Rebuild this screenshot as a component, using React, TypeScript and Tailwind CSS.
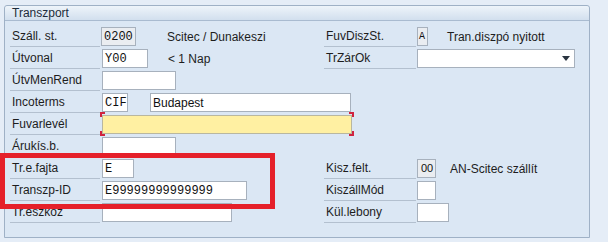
import React from "react";

const sans = { fontFamily: '"Liberation Sans", Arial, sans-serif' };
const mono = { fontFamily: '"Liberation Mono", "Courier New", monospace' };

function Label({ text, w }: { text: string; w: string }) {
  return (
    <div className={`${w} shrink-0 h-[21px] self-start flex items-center border-b border-[#b3c0cf] pl-[2px] text-[12px] text-[#1d1d1d] whitespace-nowrap`}>
      {text}
    </div>
  );
}

function Field({
  w,
  value,
  ro,
  monoFont = true,
  extra = "",
}: {
  w: string;
  value?: string;
  ro?: boolean;
  monoFont?: boolean;
  extra?: string;
}) {
  return (
    <div
      className={`${w} shrink-0 h-[19px] border border-[#a7b1bd] ${ro ? "bg-[#eaedf1]" : "bg-white"} flex items-center pl-[2px] text-[12px] text-[#111] whitespace-nowrap overflow-hidden ${extra}`}
      style={monoFont ? mono : sans}
    >
      {value}
    </div>
  );
}

function Row({ children }: { children?: React.ReactNode }) {
  return <div className="h-[22px] flex items-start">{children}</div>;
}

export default function App() {
  const left = "w-[90px]";
  const right = "w-[92px]";
  return (
    <div className="relative w-[608px] h-[242px] bg-[#e5edf7] pt-[5px] pl-[4px] overflow-hidden" style={sans}>
      <div className="w-[586px] h-[233px] border border-[#9fb1c6] rounded-t-[3px] bg-[#dbe7f4]">
        <div className="h-[15px] border-b border-[#a9bbd0] bg-gradient-to-b from-[#eef4fa] to-[#d2dfee] pl-[7px] text-[12px] leading-[15px] text-[#1d2b3a] rounded-t-[3px]">
          Transzport
        </div>
        <div className="pt-[5px] grid grid-cols-[319px_1fr]">
          {/* left column */}
          <div className="flex flex-col min-w-0">
            <Row>
              <div className="w-[5px] shrink-0" />
              <Label text="Száll. st." w={left} />
              <div className="mt-[1px] ml-[1px] flex items-center shrink-0">
                <Field w="w-[35px]" value="0200" ro />
                <span className="ml-[31px] text-[12px] text-[#1d1d1d] whitespace-nowrap">Scitec / Dunakeszi</span>
              </div>
            </Row>
            <Row>
              <div className="w-[5px] shrink-0" />
              <Label text="Útvonal" w={left} />
              <div className="mt-[1px] ml-[2px] flex items-center shrink-0">
                <Field w="w-[46px]" value="Y00" />
                <span className="ml-[20px] text-[12px] text-[#1d1d1d] whitespace-nowrap">&lt; 1 Nap</span>
              </div>
            </Row>
            <Row>
              <div className="w-[5px] shrink-0" />
              <Label text="ÚtvMenRend" w={left} />
              <div className="mt-[1px] ml-[2px] shrink-0">
                <Field w="w-[74px]" />
              </div>
            </Row>
            <Row>
              <div className="w-[5px] shrink-0" />
              <Label text="Incoterms" w={left} />
              <div className="mt-[1px] ml-[2px] flex items-center shrink-0">
                <Field w="w-[26px]" value="CIF" />
                <Field w="w-[201px]" value="Budapest" monoFont={false} extra="ml-[22px]" />
              </div>
            </Row>
            <Row>
              <div className="w-[5px] shrink-0" />
              <Label text="Fuvarlevél" w={left} />
              <div className="mt-[1px] ml-[2px] relative shrink-0">
                <div className="w-[250px] h-[19px] border border-[#b9b79f] bg-[#fff0a2]" />
                <span className="absolute -left-[2px] -top-[3px] w-[5px] h-[5px] border-l-2 border-t-2 border-[#d0243f]" />
                <span className="absolute -left-[2px] -bottom-[2px] w-[5px] h-[5px] border-l-2 border-b-2 border-[#d0243f]" />
                <span className="absolute -right-[2px] -top-[3px] w-[5px] h-[5px] border-r-2 border-t-2 border-[#d0243f]" />
                <span className="absolute -right-[2px] -bottom-[2px] w-[5px] h-[5px] border-r-2 border-b-2 border-[#d0243f]" />
              </div>
            </Row>
            <Row>
              <div className="w-[5px] shrink-0" />
              <Label text="Árukís.b." w={left} />
              <div className="mt-[1px] ml-[2px] shrink-0">
                <Field w="w-[74px]" />
              </div>
            </Row>
            <Row>
              <div className="w-[5px] shrink-0" />
              <Label text="Tr.e.fajta" w={left} />
              <div className="mt-[1px] ml-[2px] shrink-0">
                <Field w="w-[32px]" value="E" />
              </div>
            </Row>
            <Row>
              <div className="w-[5px] shrink-0" />
              <Label text="Transzp-ID" w={left} />
              <div className="mt-[1px] ml-[2px] shrink-0">
                <Field w="w-[145px]" value="E99999999999999" />
              </div>
            </Row>
            <Row>
              <div className="w-[5px] shrink-0" />
              <Label text="Tr.eszkoz" w={left} />
              <div className="mt-[1px] ml-[2px] shrink-0">
                <Field w="w-[130px]" />
              </div>
            </Row>
          </div>

          {/* right column */}
          <div className="flex flex-col">
            <Row>
              <Label text="FuvDiszSt." w={right} />
              <div className="mt-[1px] ml-[1px] flex items-center shrink-0">
                <Field w="w-[11px]" value="A" ro extra="!pl-[1px] !text-[10px]" />
                <span className="ml-[19px] text-[12px] text-[#1d1d1d] whitespace-nowrap">Tran.diszpó nyitott</span>
              </div>
            </Row>
            <Row>
              <Label text="TrZárOk" w={right} />
              <div className="mt-[1px] ml-[1px] relative shrink-0">
                <div className="w-[158px] h-[19px] border border-[#a7b1bd] bg-white" />
                <svg className="absolute right-[5px] top-[7px]" width="8" height="5" viewBox="0 0 8 5">
                  <path d="M0 0H8L4 5Z" fill="#2a3440" />
                </svg>
              </div>
            </Row>
            <Row />
            <Row />
            <Row />
            <Row />
            <Row>
              <Label text="Kisz.felt." w={right} />
              <div className="mt-[1px] ml-[1px] flex items-center shrink-0">
                <Field w="w-[19px]" value="00" ro monoFont={false} extra="!pl-[3px] !text-[11px]" />
                <span className="ml-[14px] text-[12px] text-[#1d1d1d] whitespace-nowrap">AN-Scitec szállít</span>
              </div>
            </Row>
            <Row>
              <Label text="KiszállMód" w={right} />
              <div className="mt-[1px] ml-[1px] shrink-0">
                <Field w="w-[19px]" />
              </div>
            </Row>
            <Row>
              <Label text="Kül.lebony" w={right} />
              <div className="mt-[1px] ml-[1px] shrink-0">
                <Field w="w-[32px]" />
              </div>
            </Row>
          </div>
        </div>
      </div>

      {/* red annotation rectangle */}
      <div className="absolute left-0 top-[153px] w-[275px] h-[56px] border-[5px] border-[#e5202a] pointer-events-none" />
    </div>
  );
}
